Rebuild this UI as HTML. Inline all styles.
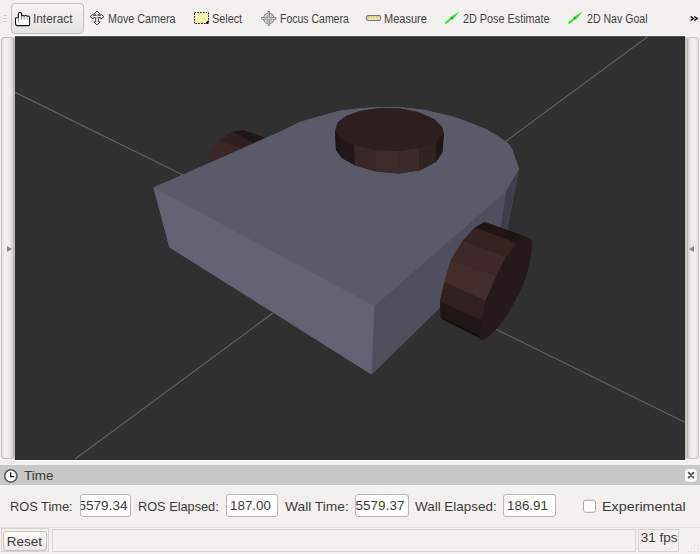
<!DOCTYPE html>
<html><head><meta charset="utf-8">
<style>
html,body{margin:0;padding:0}
body{width:700px;height:554px;background:#f2f1f0;position:relative;overflow:hidden;font-family:"Liberation Sans",sans-serif;color:#3c3b37}
.t{position:absolute;white-space:nowrap;line-height:1;transform-origin:0 0}
.tb{font-size:12px;color:#424242}
.tr{font-size:13.5px;color:#3c3b37}
.box{position:absolute;background:#fff;border:1px solid #b9b6b1;border-radius:3px;box-sizing:border-box}
.frame{position:absolute;border:1px solid #d5d3ce;box-sizing:border-box}
svg{position:absolute;left:0;top:0}
</style></head><body>

<!-- toolbar -->
<div style="position:absolute;left:3px;top:15px;width:4px;height:1px;background:#d0cec9"></div>
<div style="position:absolute;left:3px;top:18px;width:4px;height:1px;background:#d0cec9"></div>
<div style="position:absolute;left:3px;top:21px;width:4px;height:1px;background:#d0cec9"></div>
<div style="position:absolute;left:11px;top:3px;width:73px;height:31px;box-sizing:border-box;border:1px solid #c2bfba;border-radius:4px;background:linear-gradient(#f5f4f3,#e5e3e0)"></div>

<span class="t tb" style="left:32.8px;top:12.9px;transform:scaleX(0.985)">Interact</span>
<span class="t tb" style="left:108px;top:12.9px;transform:scaleX(0.895)">Move Camera</span>
<span class="t tb" style="left:211.7px;top:12.9px;transform:scaleX(0.903)">Select</span>
<span class="t tb" style="left:279.8px;top:12.9px;transform:scaleX(0.874)">Focus Camera</span>
<span class="t tb" style="left:383.5px;top:12.9px;transform:scaleX(0.917)">Measure</span>
<span class="t tb" style="left:462.9px;top:12.9px;transform:scaleX(0.902)">2D Pose Estimate</span>
<span class="t tb" style="left:586.5px;top:12.9px;transform:scaleX(0.881)">2D Nav Goal</span>

<svg width="700" height="40" viewBox="0 0 700 40">
 <!-- hand -->
 <path d="M15.5,18.6 Q15.5,17.8 16.5,17.8 L18.4,17.8 L18.4,13.4 Q20,11.4 21.6,13.4 L21.6,16.2 Q22.9,14.8 24.2,16.2 Q25.8,14.8 27.2,16.4 Q28.8,15.4 29.6,17 L29.6,24.6 Q29.6,25.6 28.6,25.6 L17.6,25.6 Q15.5,25.6 15.5,23.4 Z" fill="#fff" stroke="#111" stroke-width="1.05" stroke-linejoin="round"/>
 <path d="M18.4,17.8 L18.4,21.8 M21.6,16.2 L21.6,20 M24.2,16.2 L24.2,19.6 M27.2,16.4 L27.2,19.6" stroke="#777" stroke-width="0.8" fill="none"/>
 <!-- move camera -->
 <path d="M97,11 L100.2,14.2 L98.3,14.2 L98.3,21.8 L100.2,21.8 L97,25 L93.8,21.8 L95.7,21.8 L95.7,14.2 L93.8,14.2 Z" fill="#fff" stroke="#4a4a4a" stroke-width="1"/>
 <path d="M90,16.6 L93.2,14.2 L93.2,15.6 L100.8,15.6 L100.8,14.2 L104,16.6 L100.8,19 L100.8,17.6 L93.2,17.6 L93.2,19 Z" fill="#fff" stroke="#4a4a4a" stroke-width="1"/>
 <path d="M95.7,15.6 L98.3,15.6 L98.3,17.6 L95.7,17.6 Z" fill="#fff"/>
 <!-- select -->
 <rect x="194.5" y="12.5" width="14" height="11" fill="#fdf3b2" stroke="#111" stroke-width="1" stroke-dasharray="1.6 1.2"/>
 <path d="M205,23.5 L208.5,20 L208.5,23.5 Z" fill="#000"/>
 <!-- focus camera -->
 <circle cx="268.8" cy="18.4" r="5.2" fill="#f8f8f8" stroke="#8a8a8a" stroke-width="1.2"/>
 <path d="M268.8,11 L268.8,25.8 M261.2,18.4 L276.4,18.4" stroke="#707070" stroke-width="2.2"/>
 <path d="M268.8,12 L268.8,24.8 M262.2,18.4 L275.4,18.4" stroke="#f4f4f4" stroke-width="0.8"/>
 <path d="M266.3,15.5 L266.3,21.3 M271.3,15.5 L271.3,21.3 M265.9,15.9 L271.7,15.9 M265.9,20.9 L271.7,20.9" stroke="#9a9a9a" stroke-width="0.7"/>
 <!-- measure -->
 <rect x="366.6" y="15.5" width="14" height="5" rx="1.6" fill="#eee4a6" stroke="#777" stroke-width="1.1"/>
 <path d="M369,16 L369,18 M371.5,16 L371.5,17.5 M374,16 L374,18 M376.5,16 L376.5,17.5 M379,16 L379,18" stroke="#9a9070" stroke-width="0.6"/>
 <!-- 2D pose -->
 <path d="M446,22.8 L451.5,18.3" stroke="#2ee82e" stroke-width="2.1" stroke-linecap="round"/>
 <path d="M459.5,11.6 L450.3,16.9 L452.7,19.7 Z" fill="#2ee82e" stroke-linejoin="round"/>
 <circle cx="451.6" cy="18.2" r="1" fill="#109a10"/>
 <!-- 2D nav -->
 <path d="M569.2,22.8 L574.7,18.3" stroke="#2ee82e" stroke-width="2.1" stroke-linecap="round"/>
 <path d="M582.7,11.6 L573.5,16.9 L575.9,19.7 Z" fill="#2ee82e" stroke-linejoin="round"/>
 <circle cx="574.8000000000001" cy="18.2" r="1" fill="#109a10"/>
 <!-- chevrons -->
 <path d="M690.6,16.5 L693.4,18.5 L690.6,20.5 M694.3,16.5 L697.1,18.5 L694.3,20.5" fill="none" stroke="#000" stroke-width="1.5"/>
</svg>

<!-- viewport -->
<div style="position:absolute;left:13px;top:35px;width:674px;height:1px;background:#f9f9f9"></div>
<div style="position:absolute;left:14px;top:460px;width:672px;height:1px;background:#fafafa"></div>
<svg width="700" height="554" viewBox="0 0 700 554">
 <defs><clipPath id="vp"><rect x="15" y="36" width="670" height="424"/></clipPath></defs>
 <rect x="15" y="36" width="670" height="424" fill="#303030"/>
 <rect x="15" y="36" width="670" height="1" fill="#505050"/>
 <g clip-path="url(#vp)" stroke-linejoin="round">
  <line x1="647.9" y1="36.5" x2="75.1" y2="459" stroke="#636363" stroke-width="1.1"/>
  <line x1="15" y1="92.3" x2="685" y2="422.3" stroke="#636363" stroke-width="1.1"/>
  <!-- left wheel -->
  <polygon points="206.4,163.4 209.9,153 219,140.6 232.7,131.4 244.1,130.3 264.7,137.7 240,160" fill="#3a2727"/>
  <polygon points="219,140.6 232.7,131.4 253.3,142.9 239.6,148" fill="#2f2020"/>
  <polygon points="232.7,131.4 244.1,130.3 264.7,137.7 253.3,142.9" fill="#211616"/>
  <!-- body -->
  <polygon points="153.5,187.5 279.4,132.1 289,127.4 298.5,122.6 308,119.6 316,117.2 324,115 332,112.8 340,110.8 357,108.4 378,107 400,107.3 422,109.6 440,113.6 451.4,115.9 462.9,119.9 474.3,124.4 485.7,129 493.7,133.6 500.6,138.1 508.6,143.9 512,148.4 519,168.7 503,252 497,252 371.5,374.5 169.3,247.3" fill="#5b5a69"/>
  <polygon points="153.5,187.5 279.4,132.1 289,127.4 298.5,122.6 308,119.6 316,117.2 324,115 332,112.8 340,110.8 357,108.4 378,107 400,107.3 422,109.6 440,113.6 451.4,115.9 462.9,119.9 474.3,124.4 485.7,129 493.7,133.6 500.6,138.1 508.6,143.9 512,148.4 519,168.7 506,191.5 374.6,306" fill="#5b5a69"/>
  <polygon points="153.5,187.5 374.6,306 371.5,374.5 169.3,247.3" fill="#636272"/>
  <polygon points="374.6,306 506,191.5 497,252 371.5,374.5" fill="#504f5d"/>
  <polygon points="506,191.5 519,168.7 503,252 497,252" fill="#3f3e4b"/>
  <!-- top cylinder side -->
  <polygon points="335,131 338,122 346,116 360,111 380,108 400,108.6 418,112 434,119 442,127 443.8,133.5 442.5,152 436,162 419.5,170.5 398.5,173.5 376,171.5 355,165.5 342,158 336,150" fill="#2e2020"/>
  <polygon points="335,131 336,150 342,158 340,138" fill="#1e1515"/>
  <polygon points="340,138 342,158 355,165.5 354,145" fill="#241919"/>
  <polygon points="354,145 355,165.5 376,171.5 376,150" fill="#392727"/>
  <polygon points="376,150 376,171.5 398.5,173.5 398.5,151" fill="#3e2b2b"/>
  <polygon points="398.5,151 398.5,173.5 419.5,170.5 419.5,148" fill="#3d2a2a"/>
  <polygon points="419.5,148 419.5,170.5 436,162 436,142" fill="#322323"/>
  <polygon points="436,142 436,162 442.5,152 443.8,133.5" fill="#1f1616"/>
  <polygon points="335,131 338,122 346,116 360,111 380,108 400,108.6 418,112 434,119 442,127 443.8,133.5 436,142 419.5,148 398.5,151 376,150 354,145 340,138" fill="#2e1f1f"/>
  <!-- right wheel -->
  <polygon points="484.5,222 521,235 531.1,239.3 532.1,246.6 530,261.2 525,280 515,301 505.5,317 496,329.5 486,338.5 480.5,340 479.9,338.2 442.6,319.3 440.7,316.8 440,301.6 444.5,282 451,260 462.8,240.8 475.1,227.6" fill="#2a1c1c"/>
  <polygon points="484.5,222 475.1,227.6 517,243.2 521,235" fill="#201515"/>
  <polygon points="475.1,227.6 462.8,240.8 506.2,257 517,243.2" fill="#342321"/>
  <polygon points="462.8,240.8 451,260 496.5,276 506.2,257" fill="#3d2929"/>
  <polygon points="451,260 444.5,282 485.5,301 496.5,276" fill="#422d2d"/>
  <polygon points="444.5,282 440,301.6 481.5,320.5 485.5,301" fill="#312120"/>
  <polygon points="440,301.6 440.7,316.8 479.2,336 481.5,320.5" fill="#221717"/>
  <polygon points="440.7,316.8 442.6,319.3 479.9,338.2 479.2,336" fill="#130d0d"/>
  <polygon points="521,235 531.1,239.3 532.1,246.6 530,261.2 525,280 515,301 505.5,317 496,329.5 486,338.5 480.5,340 479.9,338.2 479.2,336 481.5,320.5 485.5,301 496.5,276 506.2,257 517,243.2" fill="#261a1a"/>
 </g>
</svg>

<!-- splitter handles -->
<div style="position:absolute;left:12px;top:37px;width:3px;height:422px;background:linear-gradient(90deg,#dcdad6,#bdbab5)"></div>
<div style="position:absolute;left:1px;top:37px;width:13px;height:422px;box-sizing:border-box;border:1px solid #c4c1bc;border-right-color:#b8b5b0;border-radius:4px;background:linear-gradient(90deg,#e6e5e3,#f1f0ef 40%,#eceae8 70%,#d6d3cf)"></div>
<div style="position:absolute;left:7px;top:245.8px;width:0;height:0;border-top:3.5px solid transparent;border-bottom:3.5px solid transparent;border-left:5px solid #858585"></div>
<div style="position:absolute;left:685px;top:37px;width:3px;height:422px;background:linear-gradient(90deg,#bdbab5,#dcdad6)"></div>
<div style="position:absolute;left:686.5px;top:37px;width:12.5px;height:422px;box-sizing:border-box;border:1px solid #c4c1bc;border-left-color:#b8b5b0;border-radius:4px;background:linear-gradient(90deg,#d6d3cf,#eceae8 30%,#f1f0ef 60%,#e6e5e3)"></div>
<div style="position:absolute;left:689px;top:245.8px;width:0;height:0;border-top:3.5px solid transparent;border-bottom:3.5px solid transparent;border-right:5px solid #858585"></div>

<!-- Time panel -->
<div style="position:absolute;left:0;top:465px;width:700px;height:19.5px;background:#c8c8c8"></div>
<svg width="700" height="554" viewBox="0 0 700 554">
 <circle cx="10.8" cy="475.9" r="6.1" fill="#fff" stroke="#5a5858" stroke-width="1.6"/>
 <path d="M10.6,472.3 L10.6,476.6 L14.2,476.6" fill="none" stroke="#111" stroke-width="1.3"/>
 <rect x="685" y="469.2" width="11.8" height="12.6" rx="3" fill="#fbfbfb"/>
 <path d="M688.6,472.7 L693.3,477.5 M693.3,472.7 L688.6,477.5" stroke="#615b5b" stroke-width="1.8" stroke-linecap="round"/>
 <rect x="583.5" y="500.3" width="12" height="12" rx="2" fill="#fff" stroke="#aaa7a2" stroke-width="1"/>
</svg>
<span class="t tr" style="left:24px;top:469px">Time</span>

<span class="t tr" style="left:10px;top:499.6px;transform:scaleX(0.948)">ROS Time:</span>
<div class="box" style="left:80px;top:494px;width:51px;height:23px;overflow:hidden"><span class="t tr" style="right:2.6px;top:4.2px">5579.34</span></div>
<span class="t tr" style="left:137.7px;top:499.6px;transform:scaleX(0.944)">ROS Elapsed:</span>
<div class="box" style="left:226px;top:494px;width:52px;height:23px"></div>
<span class="t tr" style="left:229.7px;top:498.9px;transform:scaleX(0.991)">187.00</span>
<span class="t tr" style="left:285.3px;top:499.6px;transform:scaleX(1.02)">Wall Time:</span>
<div class="box" style="left:355px;top:494px;width:54px;height:23px;overflow:hidden"><span class="t tr" style="right:3.6px;top:4.2px">5579.37</span></div>
<span class="t tr" style="left:415.2px;top:499.6px;transform:scaleX(0.995)">Wall Elapsed:</span>
<div class="box" style="left:503px;top:494px;width:53px;height:23px"></div>
<span class="t tr" style="left:506.5px;top:498.9px;transform:scaleX(0.991)">186.91</span>
<span class="t tr" style="left:602.1px;top:499.6px;transform:scaleX(1.061)">Experimental</span>

<!-- status bar -->
<div style="position:absolute;left:0;top:527px;width:700px;height:1px;background:#e2e0dc"></div>
<div class="frame" style="left:1px;top:528px;width:48px;height:24px"></div>
<div style="position:absolute;left:3px;top:531px;width:44px;height:20px;box-sizing:border-box;border:1px solid #c6c3be;border-radius:3px;background:linear-gradient(#fbfbfa,#eceae7)"></div>
<span class="t tr" style="left:6.8px;top:534.8px">Reset</span>
<div class="frame" style="left:52px;top:529px;width:584px;height:23px"></div>
<div class="frame" style="left:638px;top:529px;width:41px;height:23px"></div>
<span class="t tr" style="left:640.7px;top:531px">31 fps</span>

<svg width="700" height="554" viewBox="0 0 700 554"><g fill="#d9d7d3">
<rect x="697" y="542" width="1" height="1"/><rect x="694" y="545" width="1" height="1"/><rect x="697" y="545" width="1" height="1"/>
<rect x="691" y="548" width="1" height="1"/><rect x="694" y="548" width="1" height="1"/><rect x="697" y="548" width="1" height="1"/>
<rect x="688" y="551" width="1" height="1"/><rect x="691" y="551" width="1" height="1"/><rect x="694" y="551" width="1" height="1"/><rect x="697" y="551" width="1" height="1"/>
</g></svg>
</body></html>
